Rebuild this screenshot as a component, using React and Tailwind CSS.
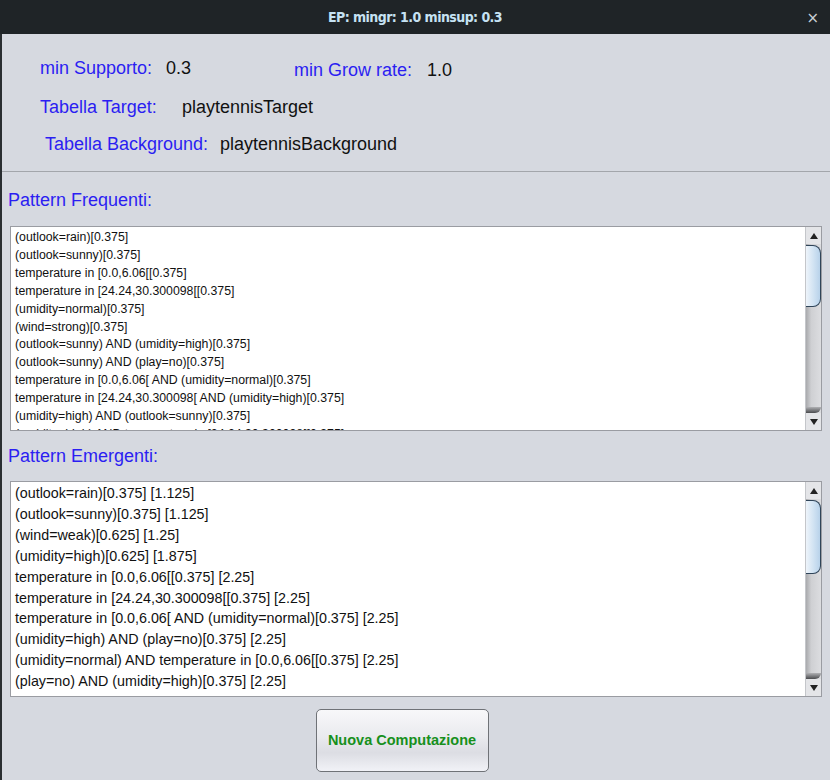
import React from 'react';

const frequenti = [
  '(outlook=rain)[0.375]',
  '(outlook=sunny)[0.375]',
  'temperature in [0.0,6.06[[0.375]',
  'temperature in [24.24,30.300098[[0.375]',
  '(umidity=normal)[0.375]',
  '(wind=strong)[0.375]',
  '(outlook=sunny) AND (umidity=high)[0.375]',
  '(outlook=sunny) AND (play=no)[0.375]',
  'temperature in [0.0,6.06[ AND (umidity=normal)[0.375]',
  'temperature in [24.24,30.300098[ AND (umidity=high)[0.375]',
  '(umidity=high) AND (outlook=sunny)[0.375]',
  '(umidity=high) AND temperature in [24.24,30.300098[[0.375]',
];

const emergenti = [
  '(outlook=rain)[0.375] [1.125]',
  '(outlook=sunny)[0.375] [1.125]',
  '(wind=weak)[0.625] [1.25]',
  '(umidity=high)[0.625] [1.875]',
  'temperature in [0.0,6.06[[0.375] [2.25]',
  'temperature in [24.24,30.300098[[0.375] [2.25]',
  'temperature in [0.0,6.06[ AND (umidity=normal)[0.375] [2.25]',
  '(umidity=high) AND (play=no)[0.375] [2.25]',
  '(umidity=normal) AND temperature in [0.0,6.06[[0.375] [2.25]',
  '(play=no) AND (umidity=high)[0.375] [2.25]',
];

const ScrollBar = ({ thumbTop, thumbHeight }) => (
  <div className="w-[16px] h-full flex flex-col border-l border-[#c4c6ca]">
    <div className="h-[17px] bg-[#e4e5e8] flex items-center justify-center">
      <div className="w-0 h-0 border-l-[4px] border-r-[4px] border-b-[6px] border-l-transparent border-r-transparent border-b-[#222]" />
    </div>
    <div className="flex-1 relative bg-[linear-gradient(to_right,#a9aaad_0%,#cfd0d3_35%,#dcdde0_100%)]">
      <div
        className="absolute left-0 right-0 rounded-r-[8px] border border-l-0 border-[#2f4458] bg-[linear-gradient(to_right,#eef4fa_0%,#d3e4f3_50%,#b8d2ea_100%)]"
        style={{ top: thumbTop, height: thumbHeight }}
      />
      <div className="absolute left-0 right-0 bottom-0 h-[6px] rounded-br-[8px] bg-[linear-gradient(to_bottom,#b0b1b4,#4a4b4e)]" />
    </div>
    <div className="h-[17px] bg-[#e4e5e8] flex items-center justify-center">
      <div className="w-0 h-0 border-l-[4px] border-r-[4px] border-t-[6px] border-l-transparent border-r-transparent border-t-[#222]" />
    </div>
  </div>
);

const ListBox = ({ rows, height, rowClass, padTop, thumbTop, thumbHeight }) => (
  <div className={`ml-[8px] mr-[8px] ${height} border border-[#9a9ca2] bg-white flex`}>
    <div className={`flex-1 overflow-hidden pl-[4px] ${padTop}`}>
      {rows.map((r) => (
        <div key={r} className={`${rowClass} text-[#111] whitespace-nowrap`}>
          {r}
        </div>
      ))}
    </div>
    <ScrollBar thumbTop={thumbTop} thumbHeight={thumbHeight} />
  </div>
);

const App = () => {
  return (
    <div className="w-[830px] h-[780px] flex flex-col bg-[#d6d9e0] font-['Liberation_Sans',Arial,sans-serif] overflow-hidden">
      <div className="h-[34px] bg-[#1f2427] flex items-center relative shrink-0">
        <div className="flex-1 text-center text-[14px] font-bold text-[#c6e2f3] tracking-[-0.04em] font-['Liberation_Sans_Narrow','DejaVu_Sans_Condensed',sans-serif]">
          EP: mingr: 1.0 minsup: 0.3
        </div>
        <div className="absolute right-[11px] top-[7px] text-[#c9d0d6] text-[15px] font-['DejaVu_Sans',sans-serif]">×</div>
      </div>

      <div className="flex-1 flex flex-col border-l-2 border-[#2a2e31]">
        <div className="pt-[24px] flex text-[18px] leading-[20px]">
          <span className="ml-[38px] w-[126px] text-[#2b1ef2]">min Supporto:</span>
          <span className="w-[128px] text-[#111]">0.3</span>
          <span className="mt-[2px] w-[133px] text-[#2b1ef2]">min Grow rate:</span>
          <span className="mt-[2px] text-[#111]">1.0</span>
        </div>
        <div className="mt-[17px] flex text-[18px] leading-[20px]">
          <span className="ml-[38px] w-[142px] text-[#2b1ef2]">Tabella Target:</span>
          <span className="text-[#111]">playtennisTarget</span>
        </div>
        <div className="mt-[17px] flex text-[18px] leading-[20px]">
          <span className="ml-[43px] w-[175px] text-[#2b1ef2]">Tabella Background:</span>
          <span className="text-[#111]">playtennisBackground</span>
        </div>
        <div className="mt-[17px] h-px bg-[#a3a6ab]" />

        <div className="mt-[18px] ml-[6px] text-[18px] leading-[20px] text-[#2b1ef2]">Pattern Frequenti:</div>
        <div className="mt-[16px]">
          <ListBox
            rows={frequenti}
            height="h-[205px]"
            rowClass="text-[12.3px] leading-[17.9px]"
            padTop="pt-[2px]"
            thumbTop={1}
            thumbHeight={62}
          />
        </div>

        <div className="mt-[15px] ml-[6px] text-[18px] leading-[20px] text-[#2b1ef2]">Pattern Emergenti:</div>
        <div className="mt-[15px]">
          <ListBox
            rows={emergenti}
            height="h-[216px]"
            rowClass="text-[14.3px] leading-[20.9px]"
            padTop="pt-[1px]"
            thumbTop={1}
            thumbHeight={74}
          />
        </div>

        <div className="mt-[12px] flex justify-center pr-[28px]">
          <button className="w-[173px] h-[63px] rounded-[5px] border border-[#6f7277] bg-[linear-gradient(to_bottom,#f8f8fa_0%,#e9eaee_45%,#dcdde3_70%,#f1f2f7_100%)] text-[14.5px] font-bold text-[#17901c]">
            Nuova Computazione
          </button>
        </div>
      </div>
    </div>
  );
};

export default App;
